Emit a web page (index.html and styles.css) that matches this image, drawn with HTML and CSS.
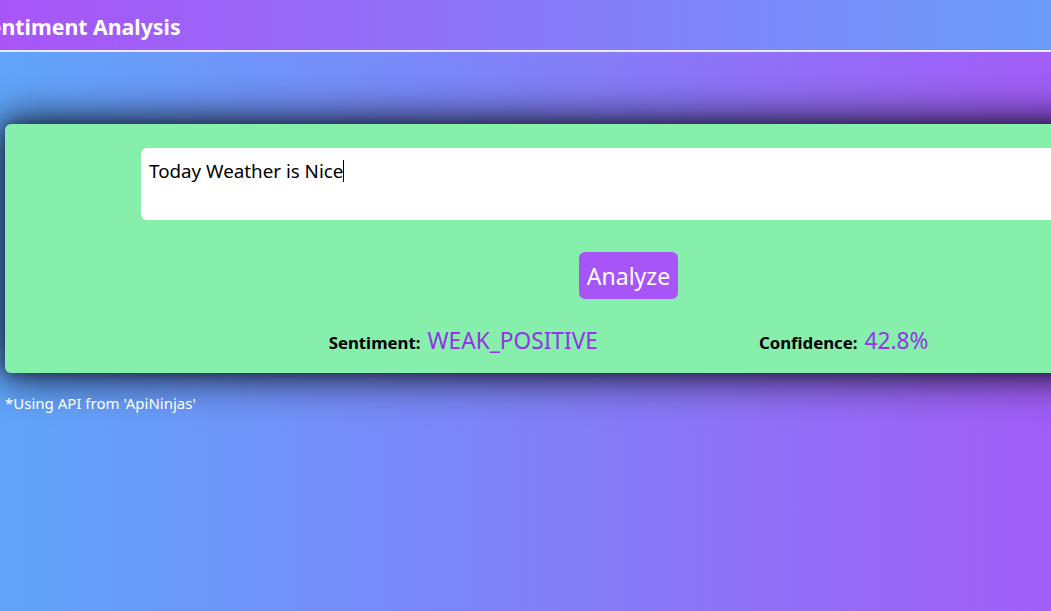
FILE: index.html
```html
<!DOCTYPE html>
<html>
<head>
<meta charset="utf-8">
<link rel="stylesheet" href="styles.css">
</head>
<body>
<header class="header">
  <h1 class="title">Sentiment Analysis</h1>
</header>
<main class="main">
  <section class="card">
    <div class="input">Today Weather is Nice<span class="caret"></span></div>
    <div class="actions"><button class="btn">Analyze</button></div>
    <div class="results">
      <div class="result"><span class="label">Sentiment:</span><span class="value">WEAK_POSITIVE</span></div>
      <div class="result"><span class="label">Confidence:</span><span class="value">42.8%</span></div>
    </div>
  </section>
  <p class="note">*Using API from 'ApiNinjas'</p>
</main>
</body>
</html>
```
FILE: styles.css
```css
html, body {
  margin: 0;
  padding: 0;
  height: 100%;
  overflow: hidden;
}
body {
  font-family: "Noto Sans", "Open Sans", sans-serif;
  background: linear-gradient(to right, #60a5fa, #a15df6);
  color: #000;
}
.header {
  height: 50px;
  border-bottom: 2px solid #ece8f8;
  background: linear-gradient(to right, #a855f7, #6b9cf9);
  display: flex;
  align-items: center;
}
.title {
  margin: 2px 0 0 -23px;
  color: #fff;
  font-size: 21.3px;
  font-weight: 700;
  white-space: nowrap;
}
.main {
  padding: 72px 0 0 5px;
}
.card {
  width: 1247px;
  box-sizing: border-box;
  background: #86efac;
  border-radius: 6px;
  box-shadow: 0 0 40px 4px rgba(0, 0, 0, 0.85), 0 0 14px rgba(0, 0, 0, 0.35);
  padding: 24px 136px 0;
  height: 249px;
}
.input {
  background: #fff;
  height: 72px;
  border-radius: 6px;
  box-sizing: border-box;
  padding: 9px 8px;
  font-size: 18.8px;
  line-height: 28px;
  white-space: nowrap;
}
.caret {
  display: inline-block;
  width: 1px;
  height: 22px;
  background: #000;
  vertical-align: -4px;
}
.actions {
  display: flex;
  justify-content: center;
  margin-top: 32px;
}
.btn {
  background: #a855f7;
  color: #fff;
  border: none;
  border-radius: 6px;
  font-family: inherit;
  font-size: 23px;
  height: 47px;
  padding: 0 8px;
}
.results {
  display: flex;
  justify-content: center;
  gap: 161px;
  margin-top: 26px;
}
.result {
  display: flex;
  align-items: baseline;
  gap: 7px;
  white-space: nowrap;
}
.label {
  font-weight: 700;
  font-size: 16.8px;
}
.value {
  color: #9333ea;
  font-size: 22.7px;
}
.note {
  margin: 20px 0 0;
  color: #fff;
  font-size: 15px;
}
```
